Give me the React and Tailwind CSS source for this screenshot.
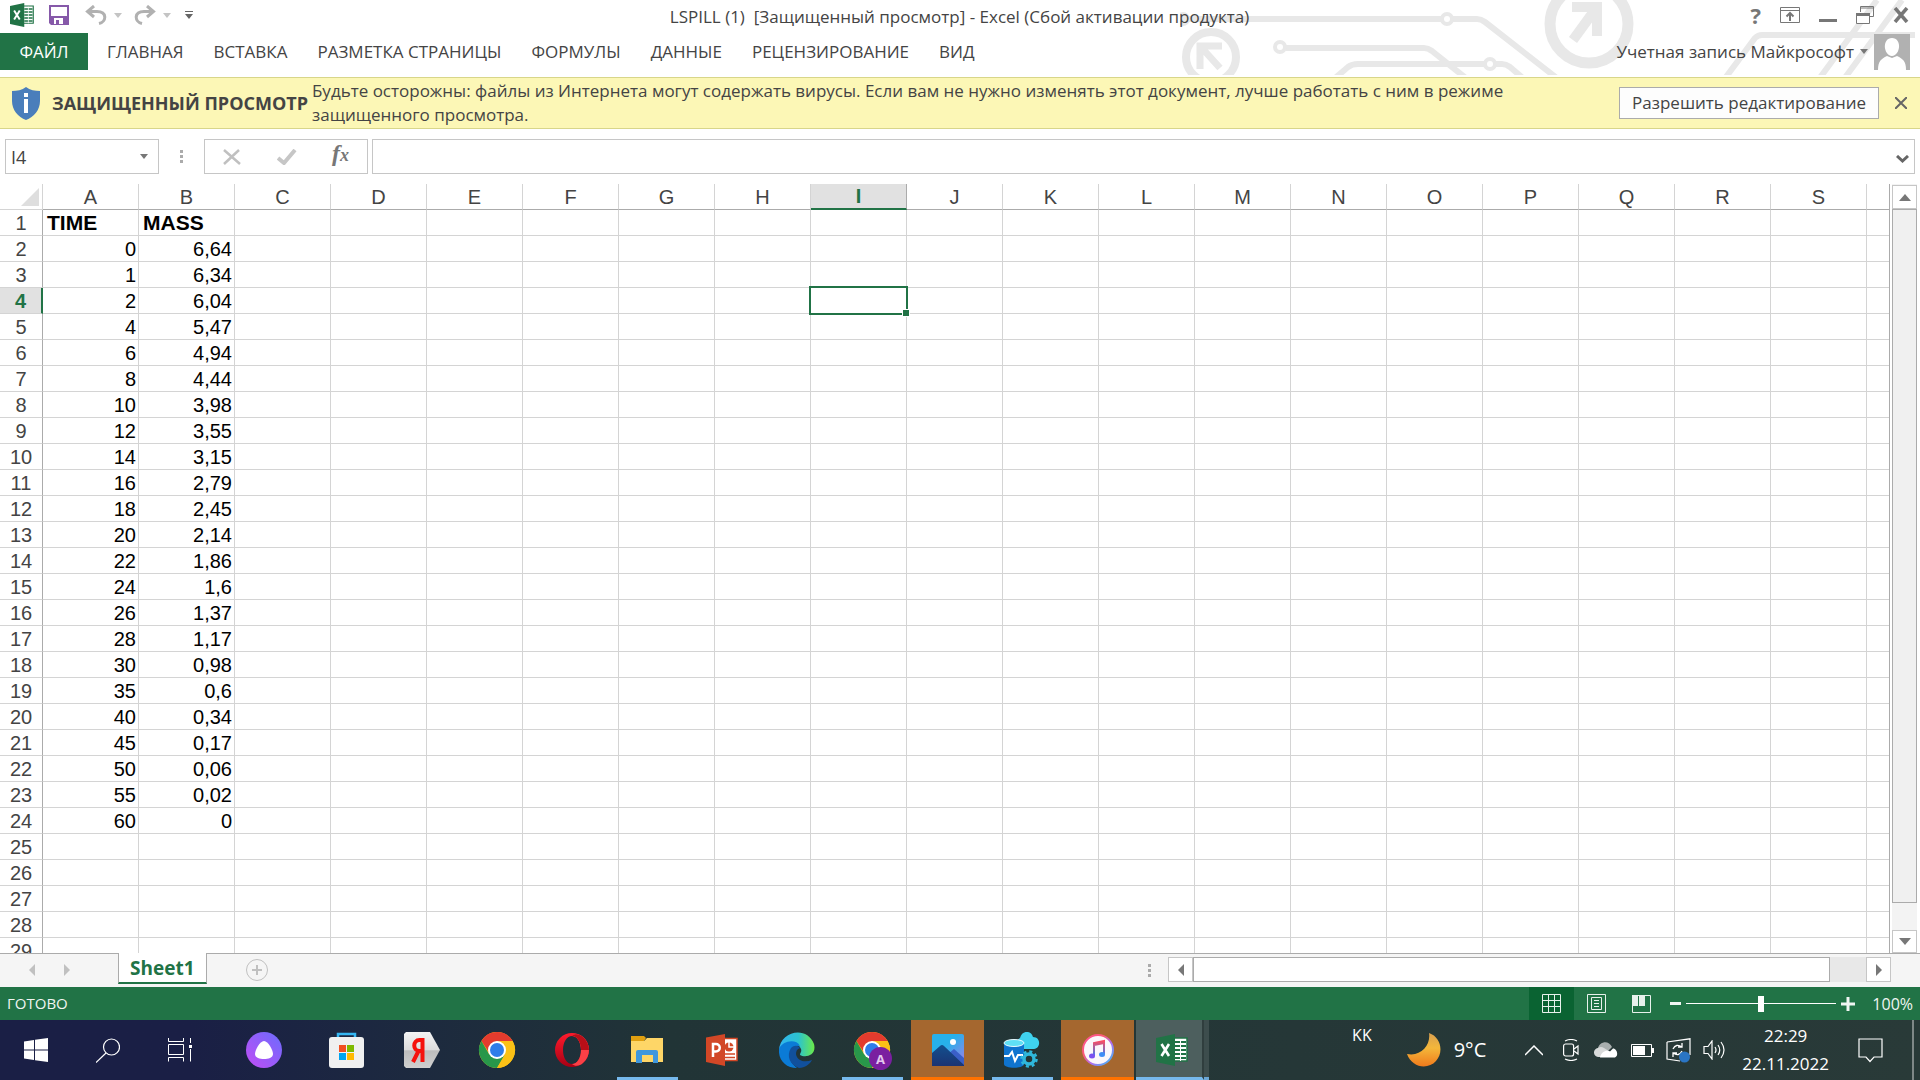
import React from "react";

const columns = "ABCDEFGHIJKLMNOPQRS".split("");

const data = [
  ["0", "6,64"],
  ["1", "6,34"],
  ["2", "6,04"],
  ["4", "5,47"],
  ["6", "4,94"],
  ["8", "4,44"],
  ["10", "3,98"],
  ["12", "3,55"],
  ["14", "3,15"],
  ["16", "2,79"],
  ["18", "2,45"],
  ["20", "2,14"],
  ["22", "1,86"],
  ["24", "1,6"],
  ["26", "1,37"],
  ["28", "1,17"],
  ["30", "0,98"],
  ["35", "0,6"],
  ["40", "0,34"],
  ["45", "0,17"],
  ["50", "0,06"],
  ["55", "0,02"],
  ["60", "0"],
];

const ribbonTabs = [
  "ГЛАВНАЯ",
  "ВСТАВКА",
  "РАЗМЕТКА СТРАНИЦЫ",
  "ФОРМУЛЫ",
  "ДАННЫЕ",
  "РЕЦЕНЗИРОВАНИЕ",
  "ВИД",
];

/* ---------- icons ---------- */

const ExcelIcon = ({ size = 24 }) => (
  <svg width={size} height={size} viewBox="0 0 32 32">
    <path d="M17 4h14v23H17z" fill="#fff" stroke="#217346" strokeWidth="1.5" />
    <path d="M19 8h11M19 12h11M19 16h11M19 20h11M19 24h11" stroke="#217346" strokeWidth="2" />
    <path d="M24.5 5v22" stroke="#fff" strokeWidth="1" />
    <path d="M0 4 19 0v32L0 28z" fill="#217346" />
    <path d="m5.500 10 7.500 12M13 10 5.500 22" stroke="#fff" strokeWidth="2.600" fill="none" />
  </svg>
);

const PowerPointIcon = () => (
  <svg width="32" height="32" viewBox="0 0 32 32">
    <path d="M17 4.500h14v22H17z" fill="#fff" stroke="#d24726" strokeWidth="1.500" />
    <path d="M19 20h10M19 23.500h10" stroke="#d24726" strokeWidth="1.500" />
    <circle cx="23" cy="13" r="4.500" fill="#d24726" />
    <path d="M23 7v6h5" stroke="#fff" strokeWidth="1.500" fill="none" />
    <path d="M0 3.500 19 0v32L0 28z" fill="#d24726" />
    <path d="M7 23V10h3a3.500 3.500 0 0 1 0 7.500H7" stroke="#fff" strokeWidth="2.500" fill="none" />
  </svg>
);

const SaveIcon = () => (
  <svg width="20" height="20" viewBox="0 0 20 20">
    <path d="M0 0h20v20H2l-2-2z" fill="#8659a9" />
    <path d="M2 2h16v9H2z" fill="#fff" />
    <path d="M5 13h9v6H5z" fill="#fff" />
    <path d="M7 15h3v4H7z" fill="#8659a9" />
  </svg>
);

const UndoIcon = () => (
  <svg width="22" height="20" viewBox="0 0 22 20" fill="none" stroke="#b1b1b1" strokeWidth="3">
    <path d="M9 1 2.500 6.500 9 12M3 6.500h9c10 0 10 10 2 12" />
  </svg>
);

const Caret = ({ color = "#777" }) => (
  <svg width="8" height="5" viewBox="0 0 8 5">
    <path d="M0 0h8L4 5z" fill={color} />
  </svg>
);

const ChromeIcon = ({ badge }) => (
  <svg width="40" height="40" viewBox="-1 0 40 40">
    <circle cx="19" cy="20" r="18" fill="#fbc116" />
    <path d="M3.400 11a18 18 0 0 1 31.200 0H19l-7 13z" fill="#e33b2e" />
    <path d="M3.400 11a18 18 0 0 0 15.600 27l8-13-8 3-8-4z" fill="#28974a" />
    <path d="M19 11h15.600A18 18 0 0 1 19 38l8-14z" fill="#fbc116" />
    <circle cx="19" cy="20" r="9" fill="#fff" />
    <circle cx="19" cy="20" r="7" fill="#2f7de9" />
    {badge && (
      <>
        <circle cx="27.500" cy="28.500" r="11.500" fill="#7a1fa0" />
        <text x="27.500" y="33.500" textAnchor="middle" fontSize="13" fontWeight="700" fill="#e3c7ee" fontFamily="Open Sans, sans-serif">
          A
        </text>
      </>
    )}
  </svg>
);

const StartIcon = () => (
  <svg width="24" height="24" viewBox="0 0 24 24" fill="#fff">
    <path d="M0 3.500 10 2v9.500H0zM11 1.800 24 0v11.500H11zM0 12.500h10V22L0 20.500zM11 12.500h13V24l-13-1.800z" />
  </svg>
);

const SearchIcon = () => (
  <svg width="24" height="25" viewBox="0 0 24 25" fill="none" stroke="#fff" strokeWidth="1.200">
    <circle cx="15.500" cy="9" r="8" />
    <path d="M10 15 0 24.500" />
  </svg>
);

const TaskViewIcon = () => (
  <svg width="24" height="24" viewBox="0 0 24 24" fill="none" stroke="#fff">
    <path d="M.5 0v3.500h15V0M.5 6.500h15v10H.5zM.5 23.500v-4h15v4M22.500 0v5M22.500 11v12.500" />
    <path d="M21 7h3v3h-3z" fill="#fff" stroke="none" />
  </svg>
);

const AliceIcon = () => (
  <svg width="36" height="36" viewBox="0 0 36 36">
    <defs>
      <linearGradient id="alice" x1="0" y1="1" x2="1" y2="0">
        <stop offset="0" stopColor="#c24df5" />
        <stop offset="1" stopColor="#6a6cfd" />
      </linearGradient>
    </defs>
    <circle cx="18" cy="18" r="18" fill="url(#alice)" />
    <path d="M18 9c4 0 9 9 9 13s-5 5-9 5-9-1-9-5 5-13 9-13z" fill="#fff" />
  </svg>
);

const StoreIcon = () => (
  <svg width="35" height="36" viewBox="0 0 35 36">
    <path d="M9 7V2h17v5" fill="none" stroke="#35b6f2" strokeWidth="2.500" />
    <rect y="5" width="35" height="31" rx="3" fill="#f0f0f0" />
    <path d="M10 13h7v7h-7z" fill="#f25022" />
    <path d="M18 13h7v7h-7z" fill="#7fba00" />
    <path d="M10 21h7v7h-7z" fill="#00a4ef" />
    <path d="M18 21h7v7h-7z" fill="#ffb900" />
  </svg>
);

const YandexIcon = () => (
  <svg width="36" height="36" viewBox="0 0 36 36">
    <defs>
      <linearGradient id="ya" x1="0" y1="0" x2="0" y2="1">
        <stop offset="0" stopColor="#f4f4f4" />
        <stop offset=".5" stopColor="#dcdcdc" />
        <stop offset=".52" stopColor="#bdbdbd" />
        <stop offset="1" stopColor="#d0d0d0" />
      </linearGradient>
    </defs>
    <path d="M2 0h24l10 18-10 18H2L0 34V2z" fill="url(#ya)" />
    <path d="M18.500 30V8h-3c-7 0-7 11 0 11h3M14.500 19 9 30" fill="none" stroke="#f5120d" strokeWidth="4" />
  </svg>
);

const OperaIcon = () => (
  <svg width="36" height="36" viewBox="0 0 36 36">
    <defs>
      <linearGradient id="opera" x1="0" y1="0" x2="0" y2="1">
        <stop offset="0" stopColor="#ff1b2d" />
        <stop offset="1" stopColor="#a70014" />
      </linearGradient>
    </defs>
    <path fillRule="evenodd" d="M18 1a17 17 0 1 0 0 34 17 17 0 0 0 0-34zm0 3c5 0 9 6 9 14s-4 14-9 14-9-6-9-14 4-14 9-14z" fill="url(#opera)" />
    <path d="M18 4c3-3 8-2 11 1 8 7 8 19 0 26-3 3-8 4-11 1 5 0 9-6 9-14S23 4 18 4z" fill="#fa4046" />
    <path d="M18 4c3-3 8-2 11 1 4 4 6 8 6 13h-8c0-8-4-14-9-14z" fill="#b90f18" />
  </svg>
);

const FolderIcon = () => (
  <svg width="32" height="28" viewBox="0 0 32 28">
    <path d="M0 0h13l2 2-2 3H0z" fill="#e0a010" />
    <path d="M0 5h13l3-3h16v24H0z" fill="#fed667" />
    <path d="M5 27V16q0-2 2-2h18q2 0 2 2v11h-5v-8H11v8z" fill="#3f97dd" />
  </svg>
);

const EdgeIcon = () => (
  <svg width="36" height="36" viewBox="0 0 36 36">
    <defs>
      <linearGradient id="edge1" x1="0" y1="0" x2="1" y2="0">
        <stop offset="0" stopColor="#31b4f0" />
        <stop offset=".55" stopColor="#2cc3cf" />
        <stop offset="1" stopColor="#6bea48" />
      </linearGradient>
    </defs>
    <path d="M0 18C1-1 28-7 35 12c3 12-9 14-14 11 0-2 2-3 1-6-3-8-18-6-22 1z" fill="url(#edge1)" />
    <path d="M0 17c3-8 17-11 21-3-6-1-10 4-10 10 0 5 3 9 7 12C7 36-1 28 0 17z" fill="#0b7bd6" />
    <path d="M12 16c-5 8-1 17 8 20 6 0 11-4 13-8-7 3-15 1-16-6 0-3 1-5 4-6-2-3-6-3-9 0z" fill="#11509c" />
  </svg>
);

const PhotosIcon = () => (
  <svg width="32" height="32" viewBox="0 0 32 32">
    <defs>
      <linearGradient id="sky" x1="0" y1="0" x2="1" y2="1">
        <stop offset=".4" stopColor="#27b0ea" />
        <stop offset="1" stopColor="#a77be8" />
      </linearGradient>
      <linearGradient id="hill" x1="0" y1="0" x2="0" y2="1">
        <stop offset="0" stopColor="#124f8e" />
        <stop offset="1" stopColor="#1b3473" />
      </linearGradient>
    </defs>
    <rect width="32" height="32" rx="2" fill="url(#sky)" />
    <path d="m16 20 6-5 10 9v8H16z" fill="#3a5fc8" />
    <path d="m0 19 8-7q2-2 4 0l20 19v1H0z" fill="url(#hill)" />
    <circle cx="21" cy="8" r="3" fill="#fff" />
  </svg>
);

const DatabaseIcon = () => (
  <svg width="38" height="36" viewBox="0 0 38 36">
    <path d="M18 17a6 6 0 0 1-1-11C19-2 28-2 30 5c8 0 8 11 1 12z" fill="#3fd2ee" />
    <path d="M1 11v21c0 5 20 5 20 0V11z" fill="#0f74cf" />
    <ellipse cx="11" cy="11" rx="10" ry="3.500" fill="#5fe0f5" stroke="#e8fbff" />
    <path d="M1 24h5l3-4 3 9 3-6h5" fill="none" stroke="#fff" strokeWidth="2" />
    <circle cx="26" cy="27" r="5" fill="none" stroke="#2fb8dc" strokeWidth="3.500" />
    <circle cx="26" cy="27" r="7.500" fill="none" stroke="#2fb8dc" strokeWidth="2.500" strokeDasharray="3 2.900" />
  </svg>
);

const MusicIcon = () => (
  <svg width="32" height="32" viewBox="0 0 32 32">
    <defs>
      <linearGradient id="ring" x1="0" y1="0" x2="1" y2="1">
        <stop offset="0" stopColor="#ff4f9a" />
        <stop offset=".35" stopColor="#fb5b74" />
        <stop offset=".6" stopColor="#b06cf0" />
        <stop offset="1" stopColor="#2fc4f5" />
      </linearGradient>
      <linearGradient id="note" x1="0" y1="0" x2="0" y2="1">
        <stop offset="0" stopColor="#fa4d63" />
        <stop offset="1" stopColor="#3d7cf6" />
      </linearGradient>
    </defs>
    <circle cx="16" cy="16" r="15" fill="#fbf7fb" stroke="url(#ring)" strokeWidth="2" />
    <path d="M12 22V9l10-2v13M12 11l10-2" fill="none" stroke="url(#note)" strokeWidth="2" />
    <ellipse cx="10" cy="22" rx="3" ry="2.500" fill="#7a50ef" />
    <ellipse cx="20" cy="20.500" rx="3" ry="2.500" fill="#3f8df6" />
  </svg>
);

const MoonIcon = () => (
  <svg width="34" height="34" viewBox="0 0 34 34">
    <defs>
      <linearGradient id="moon" x1="0" y1="0" x2="0" y2="1">
        <stop offset="0" stopColor="#d9a050" />
        <stop offset=".45" stopColor="#f4b73a" />
        <stop offset="1" stopColor="#f07a1c" />
      </linearGradient>
    </defs>
    <path d="M22 0c2 12-8 24-22 21 5 14 21 16 29 7 8-9 5-24-7-28z" fill="url(#moon)" />
  </svg>
);

/* Circuit pattern behind the title bar */
const HeaderArt = () => (
  <svg className="absolute right-0 top-0" width="740" height="75" viewBox="1180 0 740 75" fill="none" stroke="#e8e8e8" strokeWidth="6">
    <circle cx="1183" cy="19" r="7" fill="#e8e8e8" stroke="none" />
    <path d="M1185 19h256M1453 19h24q4 0 8 3l73 57" />
    <circle cx="1447" cy="19" r="5" strokeWidth="4" />
    <path d="M1286 48h138q4 0 8 3l35 28" />
    <circle cx="1280" cy="47" r="5" strokeWidth="4" />
    <path d="m1334 79 14-12q4-3 10-3h126M1496 64h6q4 0 8 3l14 12" />
    <circle cx="1490" cy="64" r="5" strokeWidth="4" />
    <circle cx="1211" cy="57" r="25" strokeWidth="8" />
    <path d="M1222 46h-22v23M1201 47l19 21" strokeWidth="7" />
    <circle cx="1589" cy="24" r="39" strokeWidth="11" />
    <path d="M1572 7h25v29M1597 7l-24 33" strokeWidth="10" />
    <path d="m1726 77 29-39q3-3 7-3h153M1819 79l58-79M1844 79l58-79" />
  </svg>
);

/* ---------- window parts ---------- */

const TitleBar = () => (
  <div className="relative flex h-[33px] items-center pb-[3px]">
    <div className="flex flex-1 items-center pl-[10px]">
      <ExcelIcon />
      <button className="ml-[15px]" aria-label="Сохранить"><SaveIcon /></button>
      <button className="ml-4 flex items-center gap-[7px]" aria-label="Отменить">
        <UndoIcon />
        <Caret color="#c4c4c4" />
      </button>
      <button className="ml-3 flex items-center gap-[7px]" aria-label="Вернуть">
        <span className="-scale-x-100"><UndoIcon /></span>
        <Caret color="#c4c4c4" />
      </button>
      <button className="ml-[14px]" aria-label="Настройка панели">
        <svg width="8" height="8" viewBox="0 0 8 8" fill="#666">
          <path d="M0 0h8v1H0zM0 3h8L4 8z" />
        </svg>
      </button>
    </div>
    <h1 className="whitespace-pre pt-1 text-[17px]">LSPILL (1)  [Защищенный просмотр] - Excel (Сбой активации продукта)</h1>
    <div className="flex flex-1 items-center justify-end gap-[19px] pr-[11px]">
      <button className="text-[22px] font-bold leading-5 text-[#777]">?</button>
      <button aria-label="Параметры отображения ленты">
        <svg width="20" height="16" viewBox="0 0 20 16" fill="none" stroke="#777">
          <path d="M.5.5h19v15H.5zM.5 3.500h19" />
          <path d="M10 14V6M6.500 9.500 10 6l3.500 3.500" strokeWidth="2" />
        </svg>
      </button>
      <button aria-label="Свернуть">
        <svg width="18" height="16" viewBox="0 0 18 16"><path d="M0 12h18v3H0z" fill="#777" /></svg>
      </button>
      <button aria-label="Развернуть">
        <svg width="18" height="18" viewBox="0 0 18 18" fill="none" stroke="#777">
          <path d="M4.500 6V.5h13v10H14M4 2h14" />
          <path d="M.5 7.500h13v10H.5z" fill="#fff" />
          <path d="M0 8.500h14" strokeWidth="3" />
        </svg>
      </button>
      <button aria-label="Закрыть">
        <svg width="16" height="16" viewBox="0 0 16 16"><path d="m2 1 12 14M14 1 2 15" stroke="#777" strokeWidth="3.500" /></svg>
      </button>
    </div>
  </div>
);

const RibbonTabs = () => (
  <div className="relative flex h-[37px] items-center text-[17px]">
    <button className="h-full w-[88px] bg-[#217346] text-white">ФАЙЛ</button>
    <nav className="ml-[19px] flex flex-1 gap-[30px]">
      {ribbonTabs.map((tab) => (
        <button key={tab}>{tab}</button>
      ))}
    </nav>
    <button className="flex items-center gap-[6px]">
      Учетная запись Майкрософт
      <Caret />
    </button>
    <svg className="ml-[6px] mr-[10px]" width="36" height="36" viewBox="0 0 36 36">
      <path d="M0 0h36v36H0z" fill="#b1b1b1" />
      <path d="M18 4c10 0 9 17 0 18-9-1-10-18 0-18zM4 36c0-9 3-11 9-14l5 2 5-2c6 3 9 5 9 14z" fill="#fff" />
    </svg>
  </div>
);

const ProtectedViewBar = () => (
  <div className="mt-[7px] flex items-center border-y border-[#d8d68a] bg-[#fcf7b6] pb-px pl-3 pr-[13px] pt-px text-[17px]">
    <svg width="28" height="33" viewBox="0 0 28 33">
      <path d="M14 0c4 3 9 4 14 4v10c0 9-6 16-14 19C6 30 0 23 0 14V4c5 0 10-1 14-4z" fill="#4a7ebb" />
      <path d="M12 12h4v14h-4zM12 6h4v4h-4z" fill="#fff" />
    </svg>
    <strong className="ml-3 whitespace-nowrap text-lg">ЗАЩИЩЕННЫЙ ПРОСМОТР</strong>
    <p className="ml-1 flex-1 pr-[60px] leading-6">
      Будьте осторожны: файлы из Интернета могут содержать вирусы. Если вам не нужно изменять этот документ, лучше работать с ним в режиме защищенного просмотра.
    </p>
    <button className="h-8 whitespace-nowrap border border-[#ababab] bg-[#fdfdfd] px-3">Разрешить редактирование</button>
    <button className="ml-4" aria-label="Закрыть сообщение">
      <svg width="12" height="12" viewBox="0 0 12 12"><path d="m0 0 12 12M12 0 0 12" stroke="#666" strokeWidth="2" /></svg>
    </button>
  </div>
);

const FormulaBar = () => (
  <div className="mt-[10px] flex h-[35px] items-stretch pl-[5px] pr-[5px] text-[#444]">
    <div className="flex w-[154px] items-center border border-[#c6c6c6] pr-[10px]">
      <input aria-label="Имя" defaultValue="I4" className="w-0 flex-1 pl-[5px] text-lg outline-none" />
      <button aria-label="Список имен"><Caret /></button>
    </div>
    <svg className="ml-[21px] self-center" width="3" height="13" viewBox="0 0 3 13" fill="#ababab">
      <path d="M0 0h3v3H0zM0 5h3v3H0zM0 10h3v3H0z" />
    </svg>
    <div className="ml-[21px] flex w-[164px] items-center justify-between border border-[#c6c6c6] pl-[18px] pr-[18px]">
      <button aria-label="Отмена">
        <svg width="18" height="16" viewBox="0 0 18 16"><path d="m1 1 16 14M16 1 1 15" stroke="#c0c0c0" strokeWidth="2.500" /></svg>
      </button>
      <button aria-label="Ввод">
        <svg width="20" height="16" viewBox="0 0 20 16"><path d="m1 9 6 5L18 1" fill="none" stroke="#c6c6c6" strokeWidth="4" /></svg>
      </button>
      <button className="pb-1 font-['Liberation_Serif',serif] text-[24px] font-bold italic leading-6 text-[#777]">
        f<span className="text-lg">x</span>
      </button>
    </div>
    <div className="ml-1 flex flex-1 items-center border border-[#c6c6c6] pr-[5px]">
      <input aria-label="Строка формул" className="w-0 flex-1 px-2 text-lg outline-none" />
      <button className="pt-1" aria-label="Развернуть строку формул">
        <svg width="13" height="8" viewBox="0 0 13 8"><path d="m1 1 5.500 5L12 1" fill="none" stroke="#666" strokeWidth="3" /></svg>
      </button>
    </div>
  </div>
);

const Sheet = () => (
  <div className="mt-[10px] flex min-h-0 flex-1">
    <div className="min-w-0 flex-1 overflow-hidden border-r border-[#ababab] font-['Liberation_Sans',Arial,sans-serif] text-xl leading-6">
      <table className="w-full table-fixed border-separate border-spacing-0">
        <colgroup>
          <col className="w-[43px]" />
          {columns.map((c) => (
            <col key={c} className="w-[96px]" />
          ))}
          <col />
        </colgroup>
        <thead>
          <tr className="h-[26px]">
            <th className="border-b border-r border-[#d4d4d4] p-0">
              <svg className="ml-auto mr-[3px]" width="18" height="18" viewBox="0 0 18 18">
                <path d="M18 0v18H0z" fill="#dedede" />
              </svg>
            </th>
            {columns.map((c) => (
              <th
                key={c}
                scope="col"
                className={
                  c === "I"
                    ? "border-b-2 border-r border-b-[#217346] border-r-[#ababab] bg-[#e1e1e1] p-0 text-[#217346]"
                    : "border-b border-r border-b-[#ababab] border-r-[#d4d4d4] p-0 pt-px font-normal text-[#444]"
                }
              >
                {c}
              </th>
            ))}
            <th className="border-b border-[#ababab] p-0" />
          </tr>
        </thead>
        <tbody className="text-black">
          {Array.from({ length: 29 }, (_, i) => i + 1).map((row) => (
            <tr key={row} className="h-[26px]">
              <th
                scope="row"
                className={
                  row === 4
                    ? "border-b border-r-2 border-b-[#d4d4d4] border-r-[#217346] bg-[#e1e1e1] p-0 pt-px text-[#217346]"
                    : "border-b border-r border-b-[#d4d4d4] border-r-[#ababab] p-0 pt-px font-normal text-[#444]"
                }
              >
                {row}
              </th>
              {columns.map((c, i) => {
                if (row === 1 && i < 2) {
                  return (
                    <td key={c} className="border-b border-r border-[#d4d4d4] p-0 pl-1 text-[21px] font-bold">
                      {i === 0 ? "TIME" : "MASS"}
                    </td>
                  );
                }
                return (
                  <td key={c} className="relative border-b border-r border-[#d4d4d4] p-0 pr-[2px] pt-px text-right">
                    {i < 2 && data[row - 2] ? data[row - 2][i] : null}
                    {row === 4 && c === "I" && (
                      <span className="absolute -inset-[2px] z-10 border-2 border-[#217346]">
                        <span className="absolute -bottom-[4px] -right-[4px] h-[8px] w-[8px] border border-white bg-[#217346]" />
                      </span>
                    )}
                  </td>
                );
              })}
              <td className="border-b border-[#d4d4d4] p-0" />
            </tr>
          ))}
        </tbody>
      </table>
    </div>

    {/* vertical scroll bar */}
    <div className="ml-[2px] mr-[3px] flex w-[25px] flex-col bg-[#f3f3f3] pt-px">
      <button className="flex h-6 items-center justify-center border border-[#c6c6c6] bg-white" aria-label="Вверх">
        <svg width="12" height="7" viewBox="0 0 12 7"><path d="M0 7h12L6 0z" fill="#777" /></svg>
      </button>
      <div className="flex-1 border border-[#ababab] bg-[#f0f0f0]" />
      <div className="h-[27px]" />
      <button className="flex h-[23px] items-center justify-center border border-[#c6c6c6] bg-white" aria-label="Вниз">
        <svg width="12" height="7" viewBox="0 0 12 7"><path d="M0 0h12L6 7z" fill="#777" /></svg>
      </button>
    </div>
  </div>
);

const SheetTabs = () => (
  <div className="flex h-[34px] border-t border-[#ababab] bg-[#f5f5f5]">
    <div className="flex w-[118px] items-center gap-[29px] pb-[2px] pl-[29px]">
      <button aria-label="Предыдущий лист">
        <svg width="6" height="12" viewBox="0 0 6 12"><path d="M6 0v12L0 6z" fill="#c0c0c0" /></svg>
      </button>
      <button aria-label="Следующий лист">
        <svg width="6" height="12" viewBox="0 0 6 12"><path d="M0 0v12l6-6z" fill="#c0c0c0" /></svg>
      </button>
    </div>
    <button className="-mt-px h-[31px] border-x border-b-2 border-x-[#ababab] border-b-[#217346] bg-white px-[11px] text-[19px] font-bold leading-7 text-[#217346]">
      Sheet1
    </button>
    <button className="ml-[39px] pb-[2px]" aria-label="Новый лист">
      <svg width="22" height="22" viewBox="0 0 22 22" fill="none" stroke="#c0c0c0">
        <circle cx="11" cy="11" r="10.500" />
        <path d="M11 6v10M6 11h10" strokeWidth="2" />
      </svg>
    </button>
    <div className="flex flex-1 items-start justify-end pr-[29px] pt-[3px]">
      <svg className="mr-[17px] mt-[7px]" width="3" height="13" viewBox="0 0 3 13" fill="#ababab">
        <path d="M0 0h3v3H0zM0 5h3v3H0zM0 10h3v3H0z" />
      </svg>
      <div className="flex h-[25px] w-[723px] bg-[#e8e8e8]">
        <button className="flex w-[25px] items-center justify-center border border-[#c6c6c6] bg-white" aria-label="Влево">
          <svg width="6" height="12" viewBox="0 0 6 12"><path d="M6 0v12L0 6z" fill="#777" /></svg>
        </button>
        <div className="flex-1 border border-[#ababab] bg-white" />
        <div className="w-[36px]" />
        <button className="flex w-[25px] items-center justify-center border border-[#c6c6c6] bg-white" aria-label="Вправо">
          <svg width="6" height="12" viewBox="0 0 6 12"><path d="M0 0v12l6-6z" fill="#777" /></svg>
        </button>
      </div>
    </div>
  </div>
);

const StatusBar = () => (
  <div className="flex h-[33px] items-center bg-[#217346] pl-[7px] pr-[7px] text-[#f0f5f2]">
    <span className="flex-1 text-[15px]">ГОТОВО</span>
    <button className="flex h-full w-[45px] items-center justify-center bg-[#0a6332]" aria-label="Обычный">
      <svg width="19" height="19" viewBox="0 0 19 19" fill="none" stroke="#e8f1ec">
        <path d="M.5.5h18v18H.5zM6.500 0v19M12.500 0v19M0 6.500h19M0 12.500h19" />
      </svg>
    </button>
    <button className="flex h-full w-[45px] items-center justify-center" aria-label="Разметка страницы">
      <svg width="19" height="19" viewBox="0 0 19 19" fill="none" stroke="#e8f1ec">
        <path d="M.5.5h18v18H.5zM4.500 3.500h10v12h-10zM7 6.500h5M7 9.500h5M7 12.500h5" />
      </svg>
    </button>
    <button className="flex h-full w-[45px] items-center justify-center" aria-label="Страничный">
      <svg width="19" height="18" viewBox="0 0 19 18" fill="none" stroke="#e8f1ec">
        <path d="M.5.5h18v17H.5z" />
        <path d="M0 0h6v11H0zM7 0h6v11H7z" fill="#e8f1ec" stroke="none" />
      </svg>
    </button>
    <button className="ml-[6px]" aria-label="Уменьшить">
      <svg width="11" height="3" viewBox="0 0 11 3"><path d="M0 0h11v3H0z" fill="#f0f5f2" /></svg>
    </button>
    <input
      type="range"
      min="0"
      max="200"
      defaultValue="100"
      aria-label="Масштаб"
      className="mx-[5px] h-4 w-[150px] appearance-none bg-[linear-gradient(#fff,#fff)] bg-[length:100%_1px] bg-center bg-no-repeat [&::-webkit-slider-thumb]:h-4 [&::-webkit-slider-thumb]:w-[6px] [&::-webkit-slider-thumb]:appearance-none [&::-webkit-slider-thumb]:bg-white"
    />
    <button aria-label="Увеличить">
      <svg width="14" height="14" viewBox="0 0 14 14"><path d="M0 7h14M7 0v14" stroke="#f0f5f2" strokeWidth="3" /></svg>
    </button>
    <span className="ml-[17px] text-right">100%</span>
  </div>
);

const runningApps = [
  { name: "Microsoft Store", icon: <StoreIcon /> },
  { name: "Яндекс", icon: <YandexIcon /> },
  { name: "Google Chrome", icon: <ChromeIcon /> },
  { name: "Opera", icon: <OperaIcon /> },
  { name: "Проводник", icon: <FolderIcon />, state: "open" },
  { name: "PowerPoint", icon: <PowerPointIcon /> },
  { name: "Microsoft Edge", icon: <EdgeIcon /> },
  { name: "Chrome A", icon: <ChromeIcon badge />, state: "open" },
  { name: "Фотографии", icon: <PhotosIcon />, state: "alert" },
  { name: "Azure", icon: <DatabaseIcon />, state: "open" },
  { name: "iTunes", icon: <MusicIcon />, state: "alert" },
];

const Taskbar = () => (
  <div className="flex h-[60px] bg-linear-to-r from-[#1a1f45] from-10% via-[#213436] via-35% to-[#293a38] text-white">
    <button className="flex w-[72px] items-center justify-center" aria-label="Пуск"><StartIcon /></button>
    <button className="flex w-[72px] items-center justify-center" aria-label="Поиск"><SearchIcon /></button>
    <button className="flex w-[72px] items-center justify-center" aria-label="Представление задач"><TaskViewIcon /></button>
    <button className="flex w-[93px] items-center justify-center pl-[2px]" aria-label="Алиса"><AliceIcon /></button>
    {runningApps.map((app) => (
      <button
        key={app.name}
        aria-label={app.name}
        className={
          app.state === "alert"
            ? "ml-[2px] flex w-[73px] items-center justify-center border-b-[3px] border-[#ff7200] bg-[#a5672f] pt-[3px]"
            : "relative flex w-[75px] items-center justify-center"
        }
      >
        {app.icon}
        {app.state === "open" && <span className="absolute bottom-0 left-2 h-[3px] w-[61px] bg-[#76b9ed]" />}
      </button>
    ))}
    <button className="ml-[2px] flex w-[68px] items-center justify-center border-b-[3px] border-r-2 border-b-[#76b9ed] border-r-[#303e3e] bg-[#4d5f5e] pl-[5px] pt-[3px]" aria-label="Excel">
      <ExcelIcon size={32} />
    </button>
    <span className="w-[5px] border-b-[3px] border-[#6ba6d5] bg-[#3d4d4d]" />

    <div className="flex flex-1 items-center justify-end">
      <span className="mr-[35px] h-[54px]">KK</span>
      <MoonIcon />
      <span className="ml-[13px] text-xl">9°C</span>
      <svg className="ml-[39px]" width="18" height="11" viewBox="0 0 18 11"><path d="m0 10 9-9 9 9" fill="none" stroke="#fff" strokeWidth="1.500" /></svg>
      <svg className="ml-5" width="16" height="22" viewBox="0 0 16 22" fill="none" stroke="#fff" strokeWidth="1.200">
        <rect x=".6" y="5" width="10" height="12" rx="2" />
        <path d="m11 10 4-3v8l-4-3M2 2q6-3 12 0M2 20q6 3 12 0" />
      </svg>
      <svg className="ml-[15px]" width="24" height="16" viewBox="0 0 24 16">
        <path d="M5 15a5 5 0 0 1-1-9C6-1 15-2 18 5l-9 9z" fill="#a8aeae" />
        <path d="M5 15A4.500 4.500 0 0 1 4 6q3-2 6 0l8 5-6 4z" fill="#d8dada" />
        <path d="M6 15.500c1-5 6-8 10-6l3-3c4 0 6 7 2 9z" fill="#fff" />
      </svg>
      <svg className="ml-[13px]" width="23" height="13" viewBox="0 0 23 13">
        <path d="M.5.500h20v12H.5z" fill="none" stroke="#fff" />
        <path d="M2 2h12v9H2zM21 4h2v5h-2z" fill="#fff" />
      </svg>
      <svg className="ml-3" width="25" height="25" viewBox="0 0 25 25" fill="none" stroke="#fff">
        <path d="M1 4 24 .8V17M1 4v17l13 2" strokeWidth="1.200" />
        <path d="M7 11q3-6 9-2M16 5v4h-4M16 13q-3 6-9 2M7 19v-4h4" strokeWidth="1.300" />
        <circle cx="18.500" cy="19" r="5.500" fill="#2a75c4" stroke="none" />
      </svg>
      <svg className="ml-3" width="23" height="20" viewBox="0 0 23 20" fill="none" stroke="#fff" strokeWidth="1.200">
        <path d="M1 6.500h4L9 1v18l-4-5.500H1zM12 7q2 3 0 6M15 5q3.500 5 0 10M18 2q6 8 0 16" />
      </svg>
      <div className="ml-4 flex flex-col items-center text-[17px] leading-7">
        <span>22:29</span>
        <span>22.11.2022</span>
      </div>
      <button className="ml-[29px]" aria-label="Уведомления">
        <svg width="25" height="25" viewBox="0 0 25 25" fill="none" stroke="#fff" strokeWidth="1.200">
          <path d="M1 1h23v18h-8l-4 4.500L8 19H1z" />
        </svg>
      </button>
      <span className="ml-[29px] mr-[6px] h-full w-[2px] bg-[#7f8887]" />
    </div>
  </div>
);

export default function App() {
  return (
    <div className="flex h-screen flex-col overflow-hidden bg-white font-['Open_Sans',sans-serif] text-[#444]">
      <header className="relative">
        <HeaderArt />
        <TitleBar />
        <RibbonTabs />
      </header>
      <ProtectedViewBar />
      <FormulaBar />
      <Sheet />
      <SheetTabs />
      <StatusBar />
      <Taskbar />
    </div>
  );
}
